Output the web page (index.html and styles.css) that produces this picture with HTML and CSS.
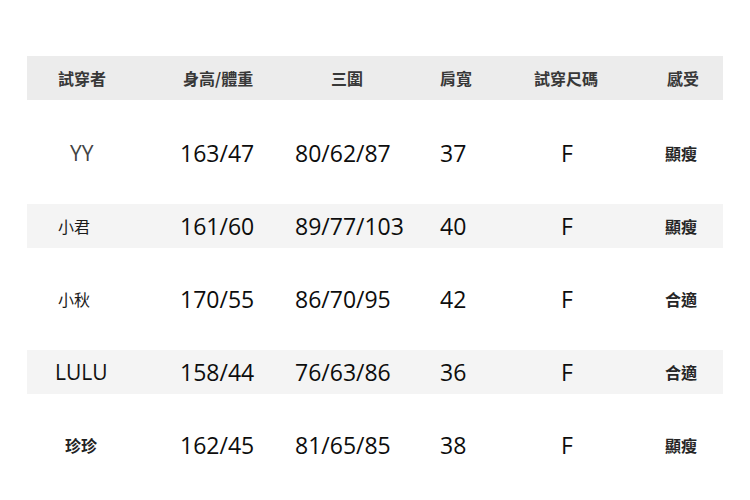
FILE: index.html
```html
<!DOCTYPE html>
<html lang="zh-Hant">
<head>
<meta charset="utf-8">
<link rel="stylesheet" href="styles.css">
</head>
<body>
<div class="table">
  <div class="row head">
    <div class="c1">試穿者</div>
    <div class="c2">身高/體重</div>
    <div class="c3">三圍</div>
    <div class="c4">肩寬</div>
    <div class="c5">試穿尺碼</div>
    <div class="c6">感受</div>
  </div>
  <div class="row first">
    <div class="c1 name latin yy">YY</div>
    <div class="c2 num">163/47</div>
    <div class="c3 num">80/62/87</div>
    <div class="c4 num">37</div>
    <div class="c5 num">F</div>
    <div class="c6 feel">顯瘦</div>
  </div>
  <div class="row shaded">
    <div class="c1 name">小君</div>
    <div class="c2 num">161/60</div>
    <div class="c3 num">89/77/103</div>
    <div class="c4 num">40</div>
    <div class="c5 num">F</div>
    <div class="c6 feel">顯瘦</div>
  </div>
  <div class="row">
    <div class="c1 name">小秋</div>
    <div class="c2 num">170/55</div>
    <div class="c3 num">86/70/95</div>
    <div class="c4 num">42</div>
    <div class="c5 num">F</div>
    <div class="c6 feel">合適</div>
  </div>
  <div class="row shaded">
    <div class="c1 name latin lulu">LULU</div>
    <div class="c2 num">158/44</div>
    <div class="c3 num">76/63/86</div>
    <div class="c4 num">36</div>
    <div class="c5 num">F</div>
    <div class="c6 feel">合適</div>
  </div>
  <div class="row">
    <div class="c1 name zz">珍珍</div>
    <div class="c2 num">162/45</div>
    <div class="c3 num">81/65/85</div>
    <div class="c4 num">38</div>
    <div class="c5 num">F</div>
    <div class="c6 feel">顯瘦</div>
  </div>
</div>
</body>
</html>
```
FILE: styles.css
```css
html, body {
  margin: 0;
  padding: 0;
  background: #ffffff;
}
body {
  font-family: "Open Sans", "Noto Sans CJK TC", sans-serif;
  color: #111111;
}
.table {
  margin: 56px 0 0 27px;
  width: 696px;
  display: flex;
  flex-direction: column;
  gap: 29px;
}
.row {
  display: grid;
  grid-template-columns: 143px 115px 145px 90px 130px 73px;
  height: 44px;
  align-items: center;
}
.row.first {
  margin-top: 2px;
}
.head {
  background: #ececec;
  font-family: "Noto Sans CJK TC", sans-serif;
  font-weight: 700;
  font-size: 16px;
  color: #383838;
}
.shaded {
  background: #f4f4f4;
}
.head .c1 { padding-left: 31px; }
.head .c2 { padding-left: 13px; }
.head .c3 { padding-left: 46px; }
.head .c4 { padding-left: 10px; }
.head .c5 { padding-left: 14px; }
.head .c6 { padding-left: 17px; }

.num {
  font-size: 23px;
  color: #0d0d0d;
}
.name {
  padding-left: 31px;
  font-family: "Noto Sans CJK TC", sans-serif;
  font-size: 16px;
  color: #1a1a1a;
}
.name.latin {
  font-family: "Open Sans", sans-serif;
  font-size: 21px;
}
.name.yy { padding-left: 43px; color: #444444; }
.name.lulu { padding-left: 28px; color: #111111; }
.name.zz { padding-left: 38px; font-weight: 700; color: #222222; }
.row .c2.num, .row .c3.num, .row .c4.num { padding-left: 10px; }
.row .c5.num { padding-left: 41px; }
.feel {
  padding-left: 15px;
  font-family: "Noto Sans CJK TC", sans-serif;
  font-weight: 700;
  font-size: 16px;
  color: #262626;
}
```
